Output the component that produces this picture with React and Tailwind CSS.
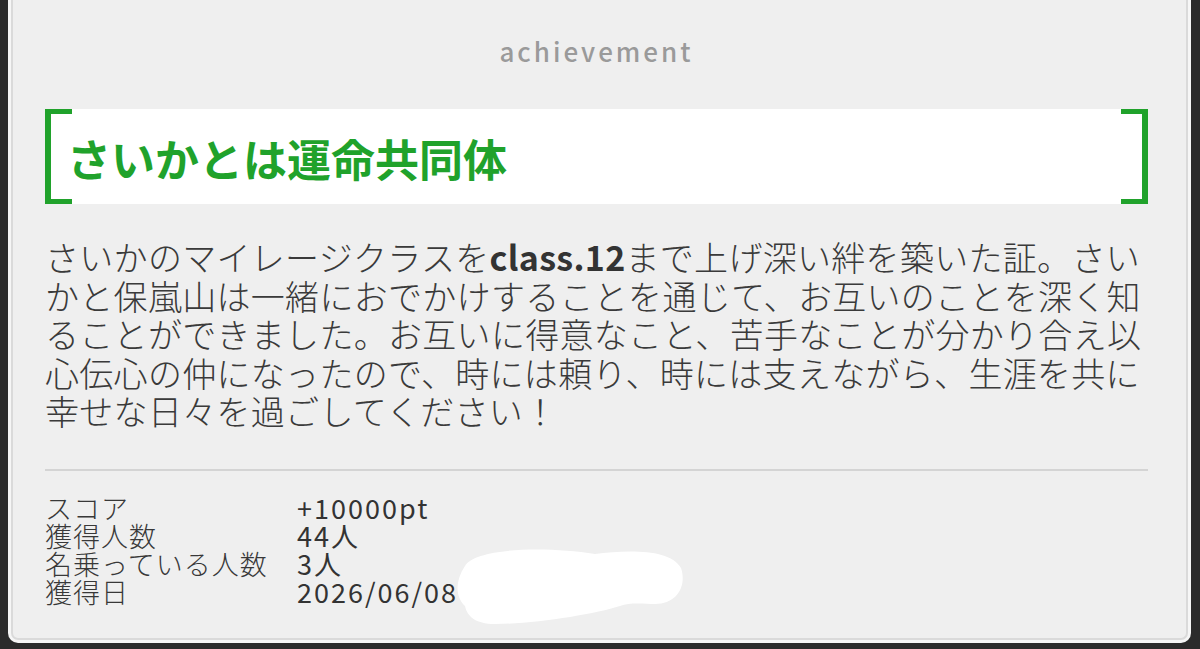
import React from 'react';

const bodyLines = [
  <>さいかのマイレージクラスを<span className="font-bold text-[#333]">class.12</span>まで上げ深い絆を築いた証。さい</>,
  'かと保嵐山は一緒におでかけすることを通じて、お互いのことを深く知',
  'ることができました。お互いに得意なこと、苦手なことが分かり合え以',
  '心伝心の仲になったので、時には頼り、時には支えながら、生涯を共に',
  '幸せな日々を過ごしてください！',
];

const stats = [
  { label: 'スコア', value: '+10000pt' },
  { label: '獲得人数', value: '44人' },
  { label: '名乗っている人数', value: '3人' },
  { label: '獲得日', value: '2026/06/08' },
];

export default function App() {
  return (
    <div className="w-[1200px] h-[649px] bg-[#2b2b2b] overflow-hidden font-['Noto_Sans_CJK_JP','Noto_Sans',sans-serif]">
      <div className="ml-[8px] w-[1183px] h-[643px] bg-[#f6f6f6] px-[3px] pb-[3px] rounded-b-[10px]">
        <div className="relative h-full bg-[#efefef] border-x-2 border-b-2 border-[#dadada] rounded-b-[7px] pl-[32px] pr-[38px] pt-[36px]">
          <div className="text-center text-[26px] leading-[30px] tracking-[3px] font-medium text-[#9a9a9a]">achievement</div>

          {/* title box with green brackets */}
          <div className="relative mt-[43px] h-[95px] bg-white flex items-center pl-[22px]">
            <div className="absolute left-0 top-0 w-[27px] h-full border-l-[6px] border-y-[5px] border-[#20a22b]" />
            <div className="absolute right-0 top-0 w-[27px] h-full border-r-[6px] border-y-[5px] border-[#20a22b]" />
            <h1 className="text-[44px] leading-[50px] font-bold text-[#20a22b] pt-[2px]">さいかとは運命共同体</h1>
          </div>

          <div className="mt-[34px] text-[34px] leading-[38.5px] font-light text-[#3a3a3a] tracking-[0.3px]">
            {bodyLines.map((l, i) => (
              <div key={i} className="whitespace-nowrap">{l}</div>
            ))}
          </div>

          <div className="mt-[38px] h-[2px] bg-[#d4d4d4]" />

          <div className="mt-[23px] grid grid-cols-[252px_1fr] text-[27px] leading-[28px] font-light text-[#383838]">
            {stats.map((s) => (
              <React.Fragment key={s.label}>
                <div className="whitespace-nowrap tracking-[1px]">{s.label}</div>
                <div className="font-normal text-[#333] tracking-[2px]">{s.value}</div>
              </React.Fragment>
            ))}
          </div>

          {/* white redaction scribble */}
          <svg className="absolute left-[442px] top-[546px]" width="232" height="82" viewBox="0 0 232 82">
            <path
              d="M10 20 C20 2 90 0 140 8 C170 4 215 2 226 22 C232 40 222 58 200 58 C190 58 175 56 165 60 C140 68 80 78 40 78 C20 78 12 70 10 60 C0 50 0 35 10 20 Z"
              fill="#ffffff"
            />
          </svg>
        </div>
      </div>
    </div>
  );
}
